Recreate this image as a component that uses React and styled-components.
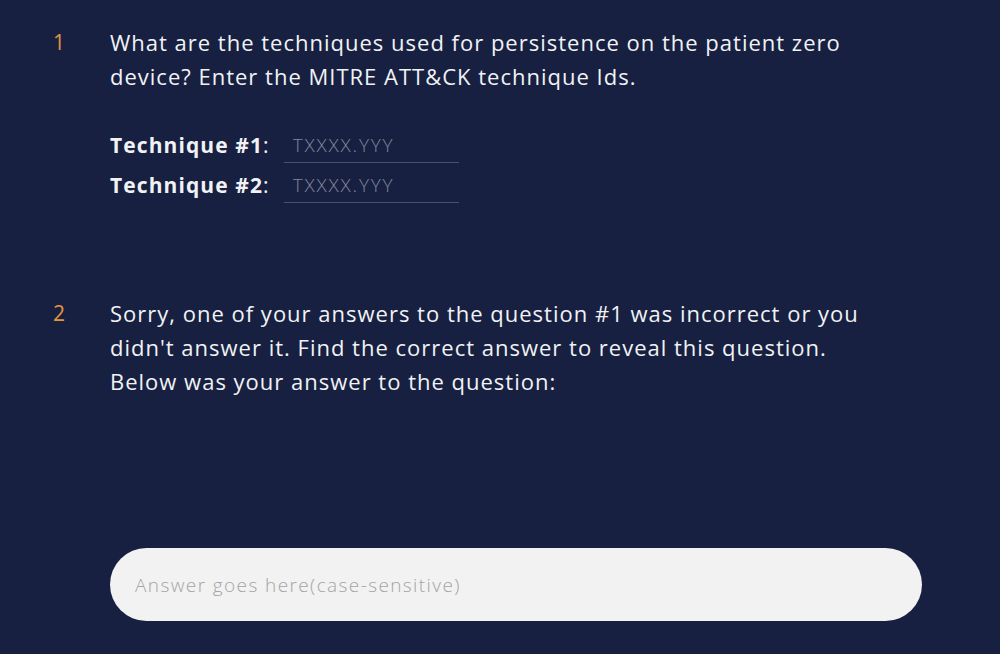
import styled, { createGlobalStyle } from "styled-components";

const GlobalStyle = createGlobalStyle`
  html, body {
    margin: 0;
    padding: 0;
    background: #172040;
  }
  body {
    font-family: "Open Sans", "Liberation Sans", sans-serif;
  }
`;

const Page = styled.div`
  min-height: 100vh;
  box-sizing: border-box;
  padding: 25px 60px 30px 49px;
  color: #f1f2f5;
`;

const Question = styled.div`
  display: flex;
  margin-bottom: ${(p) => p.gap || 0}px;
`;

const Num = styled.div`
  width: 61px;
  flex: none;
  font-size: 21px;
  line-height: 34px;
  font-weight: 400;
  color: #e3953d;
  padding-left: 4px;
  box-sizing: border-box;
`;

const Body = styled.div`
  flex: 1;
`;

const Text = styled.p`
  margin: 0;
  font-size: 22px;
  line-height: 34px;
  letter-spacing: 1px;
  max-width: 760px;
`;

const Fields = styled.div`
  margin-top: 32px;
`;

const Row = styled.div`
  display: flex;
  align-items: center;
  height: 40px;
`;

const Label = styled.label`
  font-size: 21px;
  letter-spacing: 1.1px;
  b {
    font-weight: 700;
  }
`;

const Field = styled.input`
  margin: 4px 0 0 14px;
  width: 175px;
  height: 32px;
  box-sizing: border-box;
  padding: 0 9px 3px;
  background: transparent;
  border: none;
  border-bottom: 1px solid #4a5170;
  color: #fff;
  font-family: inherit;
  font-size: 19px;
  font-weight: 300;
  outline: none;
  &::placeholder {
    color: #80859a;
    letter-spacing: 1.8px;
  }
`;

const AnswerBox = styled.input`
  display: block;
  margin-top: 150px;
  width: 812px;
  height: 73px;
  box-sizing: border-box;
  border: none;
  border-radius: 37px;
  background: #f2f2f2;
  padding: 0 25px;
  font-family: inherit;
  font-size: 19px;
  font-weight: 300;
  color: #333;
  outline: none;
  &::placeholder {
    color: #a4a4a7;
    letter-spacing: 1.4px;
  }
`;

export default function App() {
  return (
    <Page>
      <GlobalStyle />
      <Question gap={91}>
        <Num>1</Num>
        <Body>
          <Text>
            What are the techniques used for persistence on the patient zero
            device? Enter the MITRE ATT&amp;CK technique Ids.
          </Text>
          <Fields>
            <Row>
              <Label>
                <b>Technique #1</b>:
              </Label>
              <Field placeholder="TXXXX.YYY" />
            </Row>
            <Row>
              <Label>
                <b>Technique #2</b>:
              </Label>
              <Field placeholder="TXXXX.YYY" />
            </Row>
          </Fields>
        </Body>
      </Question>
      <Question>
        <Num>2</Num>
        <Body>
          <Text>
            Sorry, one of your answers to the question #1 was incorrect or you
            didn't answer it. Find the correct answer to reveal this question.
            Below was your answer to the question:
          </Text>
          <AnswerBox placeholder="Answer goes here(case-sensitive)" />
        </Body>
      </Question>
    </Page>
  );
}
